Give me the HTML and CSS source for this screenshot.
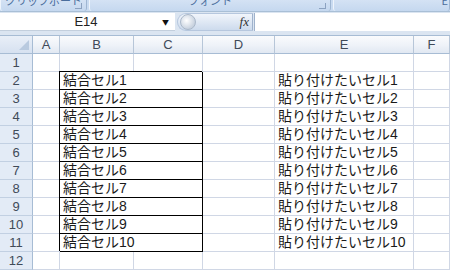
FILE: index.html
```html
<!DOCTYPE html>
<html>
<head>
<meta charset="utf-8"/>
<title>Book1</title>
<link rel="stylesheet" href="styles.css">
</head>
<body>
<div class="ribbon">
  <div class="group g-clip"><span class="label">クリップボード</span><span class="launcher"></span></div>
  <div class="group g-font"><span class="label">フォント</span><span class="launcher"></span></div>
  <div class="group g-edit"><span class="label">E</span></div>
</div>
<div class="formula-bar">
  <div class="name-box"><span class="name">E14</span><span class="arrow">▼</span></div>
  <div class="fx-button"><span class="knob"></span><span class="fx">fx</span></div>
  <div class="formula-input"></div>
</div>
<div class="sheet">
  <div class="corner"></div>
  <div class="col-head">A</div><div class="col-head">B</div><div class="col-head">C</div>
  <div class="col-head">D</div><div class="col-head">E</div><div class="col-head">F</div>

  <div class="row-head">1</div><div class="cell"></div><div class="cell"></div><div class="cell"></div><div class="cell"></div><div class="cell"></div><div class="cell"></div>
  <div class="row-head">2</div><div class="cell"></div><div class="cell merged">結合セル1</div><div class="cell"></div><div class="cell">貼り付けたいセル1</div><div class="cell"></div>
  <div class="row-head">3</div><div class="cell"></div><div class="cell merged">結合セル2</div><div class="cell"></div><div class="cell">貼り付けたいセル2</div><div class="cell"></div>
  <div class="row-head">4</div><div class="cell"></div><div class="cell merged">結合セル3</div><div class="cell"></div><div class="cell">貼り付けたいセル3</div><div class="cell"></div>
  <div class="row-head">5</div><div class="cell"></div><div class="cell merged">結合セル4</div><div class="cell"></div><div class="cell">貼り付けたいセル4</div><div class="cell"></div>
  <div class="row-head">6</div><div class="cell"></div><div class="cell merged">結合セル5</div><div class="cell"></div><div class="cell">貼り付けたいセル5</div><div class="cell"></div>
  <div class="row-head">7</div><div class="cell"></div><div class="cell merged">結合セル6</div><div class="cell"></div><div class="cell">貼り付けたいセル6</div><div class="cell"></div>
  <div class="row-head">8</div><div class="cell"></div><div class="cell merged">結合セル7</div><div class="cell"></div><div class="cell">貼り付けたいセル7</div><div class="cell"></div>
  <div class="row-head">9</div><div class="cell"></div><div class="cell merged">結合セル8</div><div class="cell"></div><div class="cell">貼り付けたいセル8</div><div class="cell"></div>
  <div class="row-head">10</div><div class="cell"></div><div class="cell merged">結合セル9</div><div class="cell"></div><div class="cell">貼り付けたいセル9</div><div class="cell"></div>
  <div class="row-head">11</div><div class="cell"></div><div class="cell merged">結合セル10</div><div class="cell"></div><div class="cell">貼り付けたいセル10</div><div class="cell"></div>
  <div class="row-head">12</div><div class="cell"></div><div class="cell"></div><div class="cell"></div><div class="cell"></div><div class="cell"></div><div class="cell"></div>
</div>
</body>
</html>
```

FILE: styles.css
```css
html, body { margin: 0; height: 100%; overflow: hidden; background: #fff; }
body { font-family: "Noto Sans CJK JP", "DejaVu Sans", sans-serif; }

.ribbon {
  height: 11px; display: flex; overflow: hidden;
  background: #c9dbf1;
  border-bottom: 1px solid #a9bfd6;
}
.group {
  display: flex; align-items: flex-end; justify-content: center; position: relative;
  border-right: 1px solid #9fb6d2; border-left: 1px solid #eef4fb;
  background: linear-gradient(#d4e2f4, #c5d8ef);
  border-radius: 0 0 3px 3px;
}
.label {
  font-size: 11px; line-height: 11px; color: #4a6d9c;
  transform: translateY(-5px);
}
.g-clip { width: 85px; }
.g-font { width: 240px; margin-left: 2px; }
.g-edit { flex: 1; margin-left: 2px; justify-content: flex-end; padding-right: 1px; }
.launcher {
  position: absolute; right: 4px; bottom: 2px;
  width: 6px; height: 5px; border: 1px solid #8ca2c0; border-top: 0; border-left: 0;
}

.formula-bar {
  height: 23px; display: flex; align-items: stretch;
  background: #dbe5f1; border-bottom: 1px solid #a7bcd4;
}
.name-box {
  width: 175px; background: #fff; display: flex; align-items: center;
  border-bottom: 1px solid #c3cfdd; margin-bottom: 4px; margin-top: 1px;
}
.name { flex: 1; text-align: center; font: 13px "Liberation Sans", Arial, sans-serif; color: #222; padding-left: 10px; }
.arrow { font-size: 7px; color: #111; margin-right: 6px; }
.fx-button {
  width: 74px; margin: 1px 0 4px 2px; display: flex; align-items: center; justify-content: space-between;
  background: linear-gradient(#f1f5fb, #cddbed); border-radius: 10px 0 0 10px;
  border: 1px solid #b6c7de; border-right: 1px solid #9fb2cc;
}
.knob {
  width: 14px; height: 14px; border-radius: 50%; margin-left: 2px;
  background: radial-gradient(circle at 40% 40%, #fff, #c8d2df 70%);
  border: 1px solid #aab8c9;
}
.fx { font: italic 13px "Liberation Serif", serif; color: #333; margin-right: 3px; }
.formula-input { flex: 1; background: #fff; margin: 1px 0 4px 1px; border-left: 1px solid #9fb2cc; }

.sheet {
  display: grid;
  grid-template-columns: 33px 27px 74px 69px 72px 139px 1fr;
  grid-auto-rows: 18px;
  font-family: "Liberation Sans", "Noto Sans CJK JP", sans-serif;
  font-size: 14px; color: #1a1a1a;
}
.corner {
  background: linear-gradient(#e9eff8, #d6e1f0);
  border-right: 1px solid #a7bcd4; border-bottom: 1px solid #a7bcd4;
  position: relative;
}
.corner::after {
  content: ""; position: absolute; right: 3px; bottom: 3px;
  border-left: 10px solid transparent; border-bottom: 10px solid #b9cadf;
}
.col-head {
  background: linear-gradient(#fafbfd, #eef2f8 55%, #e1e8f2);
  border-right: 1px solid #b7c6d8; border-bottom: 1px solid #a7bcd4;
  text-align: center;
  font: 13px/17px "Liberation Sans", Arial, sans-serif; color: #404a58;
}
.row-head {
  background: #e3ebf6;
  border-right: 1px solid #a7bcd4; border-bottom: 1px solid #c2d0e2;
  text-align: center;
  font: 13px/17px "Liberation Sans", Arial, sans-serif; color: #404a58;
}
.cell {
  border-right: 1px solid #d0d7e5; border-bottom: 1px solid #d0d7e5;
  line-height: 17px; padding-left: 3px; white-space: nowrap; overflow: hidden;
}
.merged {
  grid-column: span 2;
  border-right: 1px solid #000; border-bottom: 1px solid #000;
  box-shadow: -1px -1px 0 #000;
}
```
